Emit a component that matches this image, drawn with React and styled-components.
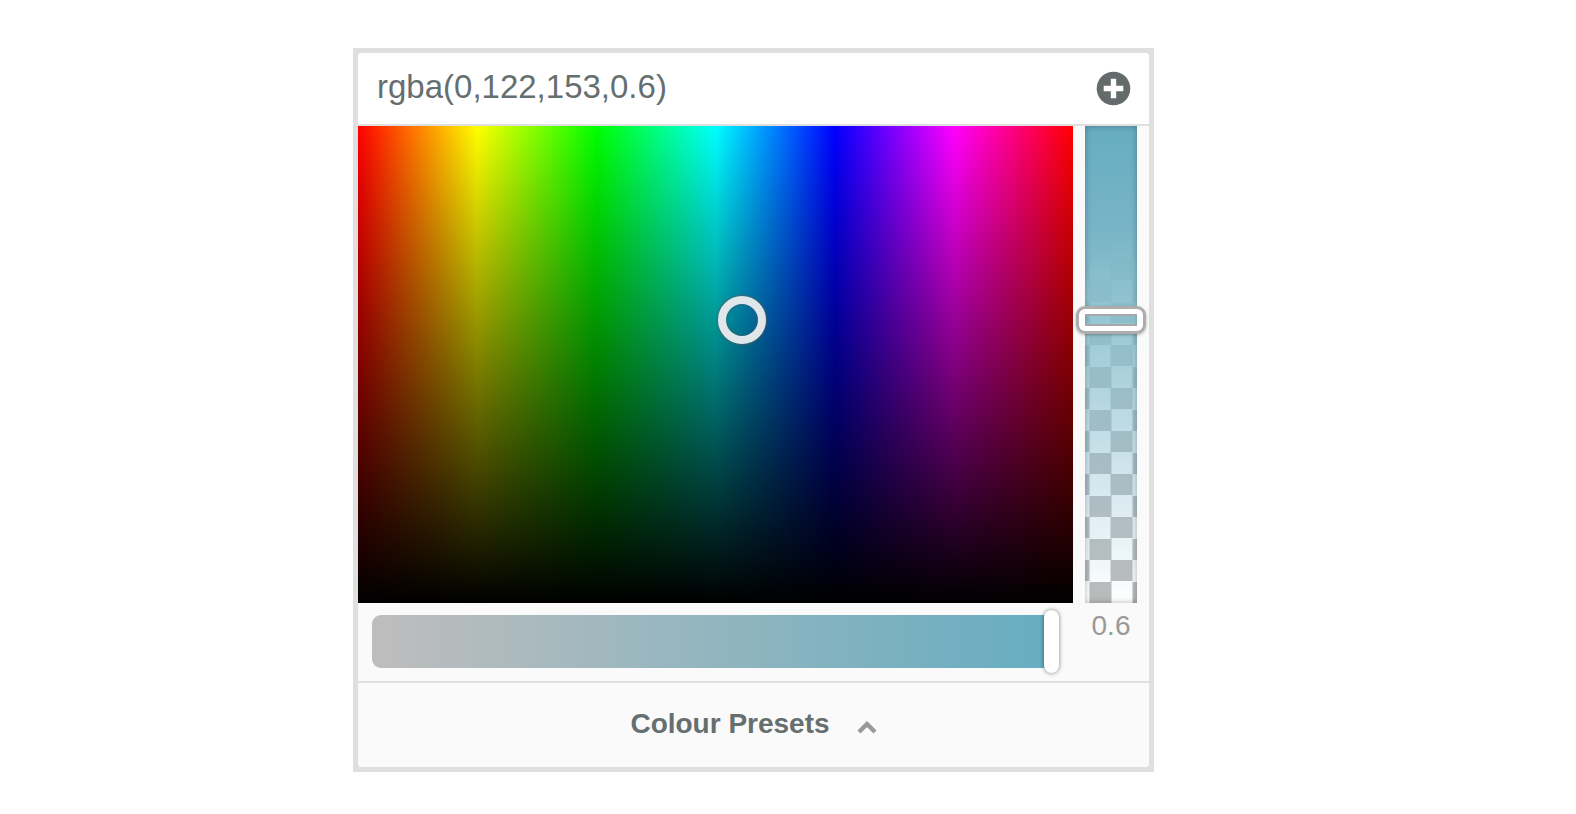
import React, { useState } from "react";
import styled, { createGlobalStyle } from "styled-components";

const GlobalStyle = createGlobalStyle`
  *, *::before, *::after { box-sizing: border-box; }
  body {
    margin: 0;
    background: #fff;
    font-family: "Liberation Sans", Arial, sans-serif;
    color: #666f6f;
  }
`;

const Page = styled.main`
  display: grid;
  grid-template-columns: 353fr 801fr 422fr;
  padding: 48px 0 40px;
`;

const Frame = styled.section`
  grid-column: 2;
  min-width: 0;
  background: #dfdfdf;
  padding: 5px;
`;

const Picker = styled.div`
  background: #fafafa;
  border-radius: 4px;
  overflow: hidden;
`;

const Header = styled.header`
  display: flex;
  align-items: center;
  height: 73px;
  padding: 0 18px 0 19px;
  background: #fff;
  border-bottom: 2px solid #dfdfdf;
`;

const ColourInput = styled.input`
  flex: 1;
  min-width: 0;
  height: 40px;
  margin: 0 0 4px;
  padding: 0;
  border: 0;
  outline: 0;
  background: transparent;
  color: inherit;
  font: 33px/40px "Liberation Sans", Arial, sans-serif;
`;

const AddButton = styled.button`
  display: flex;
  padding: 0;
  border: 0;
  background: none;
  color: #636b6b;
  cursor: pointer;
`;

const Controls = styled.div`
  display: grid;
  grid-template-columns: minmax(0, 1fr) 76px;
`;

const Palette = styled.div`
  position: relative;
  height: 477px;
  background:
    linear-gradient(to bottom, transparent, #000),
    linear-gradient(to right, #f00, #ff0, #0f0, #0ff, #00f, #f0f, #f00);
`;

const Cursor = styled.span`
  position: absolute;
  width: 48px;
  height: 48px;
  border: 8px solid #dfe7ea;
  border-radius: 50%;
  transform: translate(-50%, -50%);
  box-shadow: 0 0 2px 1px rgba(90, 90, 90, 0.8), inset 0 0 2px 1px rgba(70, 90, 100, 0.7);
`;

const AlphaColumn = styled.div`
  display: flex;
  justify-content: center;
`;

const AlphaSlider = styled.input`
  appearance: none;
  writing-mode: vertical-lr;
  direction: ltr;
  width: 52px;
  height: 477px;
  margin: 0;
  outline: 0;
  cursor: pointer;
  background:
    linear-gradient(
      to bottom,
      #66adc1 0%,
      #78b5c6 22%,
      rgba(134, 189, 204, 0.94) 34%,
      rgba(136, 191, 206, 0.8) 46%,
      rgba(143, 191, 210, 0.42) 72%,
      rgba(160, 205, 220, 0.22) 88%,
      rgba(160, 205, 220, 0) 100%
    ),
    repeating-conic-gradient(#bababa 0 25%, #fff 0 50%) center bottom / 43px 43px;
  box-shadow: inset 0 0 6px rgba(0, 0, 0, 0.3);

  &::-webkit-slider-runnable-track {
    width: 52px;
    height: 100%;
  }

  &::-webkit-slider-thumb {
    appearance: none;
    width: 70px;
    height: 28px;
    margin-left: -9px;
    border: 3px solid #adadad;
    border-radius: 9px;
    background:
      linear-gradient(#fff, #fff) top / 100% 5px no-repeat,
      linear-gradient(#fff, #fff) bottom / 100% 5px no-repeat,
      linear-gradient(#fff, #fff) left / 6px 100% no-repeat,
      linear-gradient(#fff, #fff) right / 6px 100% no-repeat,
      linear-gradient(#a5a9aa, #a5a9aa) 50% 5px / 52px 2px no-repeat,
      linear-gradient(#a5a9aa, #a5a9aa) 50% 15px / 52px 2px no-repeat;
    background-origin: padding-box;
    background-clip: padding-box;
    box-shadow: 0 1px 3px rgba(0, 0, 0, 0.3);
  }
`;

const SaturationRow = styled.div`
  display: flex;
  height: 78px;
  padding: 12px 14px 13px;
`;

const SaturationSlider = styled.input`
  appearance: none;
  flex: 1;
  min-width: 0;
  height: 53px;
  margin: 0;
  outline: 0;
  cursor: pointer;
  border-radius: 9px;
  background: linear-gradient(to right, #bdbdbd 2%, #66adc1) left / calc(100% - 8px) 100% no-repeat;

  &::-webkit-slider-runnable-track {
    height: 53px;
  }

  &::-webkit-slider-thumb {
    appearance: none;
    width: 15px;
    height: 63px;
    margin-top: -5px;
    border-radius: 8px;
    background: #fff;
    box-shadow: 0 0 4px rgba(0, 0, 0, 0.5);
  }
`;

const AlphaValue = styled.output`
  padding-top: 7px;
  text-align: center;
  color: #999;
  font-size: 28px;
  line-height: 32px;
`;

const PresetsButton = styled.button`
  display: flex;
  align-items: center;
  justify-content: center;
  gap: 27px;
  width: 100%;
  height: 86px;
  padding: 0 0 2px;
  border: 0;
  border-top: 2px solid #dfdfdf;
  background: #fafafa;
  color: #666f6f;
  font: bold 28px/32px "Liberation Sans", Arial, sans-serif;
  cursor: pointer;

  svg { margin-top: 6px; }
`;

export default function App() {
  const [colour, setColour] = useState("rgba(0,122,153,0.6)");
  const [alpha, setAlpha] = useState(0.6);
  const [saturation, setSaturation] = useState(100);

  return (
    <Page>
      <GlobalStyle />
      <Frame aria-label="Colour picker">
        <Picker>
          <Header>
            <ColourInput
              aria-label="Colour"
              value={colour}
              spellCheck={false}
              onChange={(e) => setColour(e.target.value)}
            />
            <AddButton type="button" aria-label="Add preset">
              <svg width="35" height="35" viewBox="0 0 35 35" aria-hidden="true">
                <circle cx="17.5" cy="17.5" r="16.8" fill="currentColor" />
                <path d="M17.5 7.7v19.6M7.7 17.5h19.6" stroke="#fff" strokeWidth="5.4" />
              </svg>
            </AddButton>
          </Header>
          <Controls>
            <Palette>
              <Cursor style={{ left: "53.7%", top: "40.6%" }} />
            </Palette>
            <AlphaColumn>
              <AlphaSlider
                type="range"
                aria-label="Opacity"
                min="0"
                max="1"
                step="0.1"
                value={1 - alpha}
                onChange={(e) => setAlpha(1 - Number(e.target.value))}
              />
            </AlphaColumn>
            <SaturationRow>
              <SaturationSlider
                type="range"
                aria-label="Saturation"
                min="0"
                max="100"
                value={saturation}
                onChange={(e) => setSaturation(Number(e.target.value))}
              />
            </SaturationRow>
            <AlphaValue>{alpha.toFixed(1)}</AlphaValue>
          </Controls>
          <PresetsButton type="button">
            Colour Presets
            <svg width="20" height="14" viewBox="0 0 20 14" aria-hidden="true">
              <path d="M2 12 10 4l8 8" fill="none" stroke="#999" strokeWidth="4.4" />
            </svg>
          </PresetsButton>
        </Picker>
      </Frame>
    </Page>
  );
}
